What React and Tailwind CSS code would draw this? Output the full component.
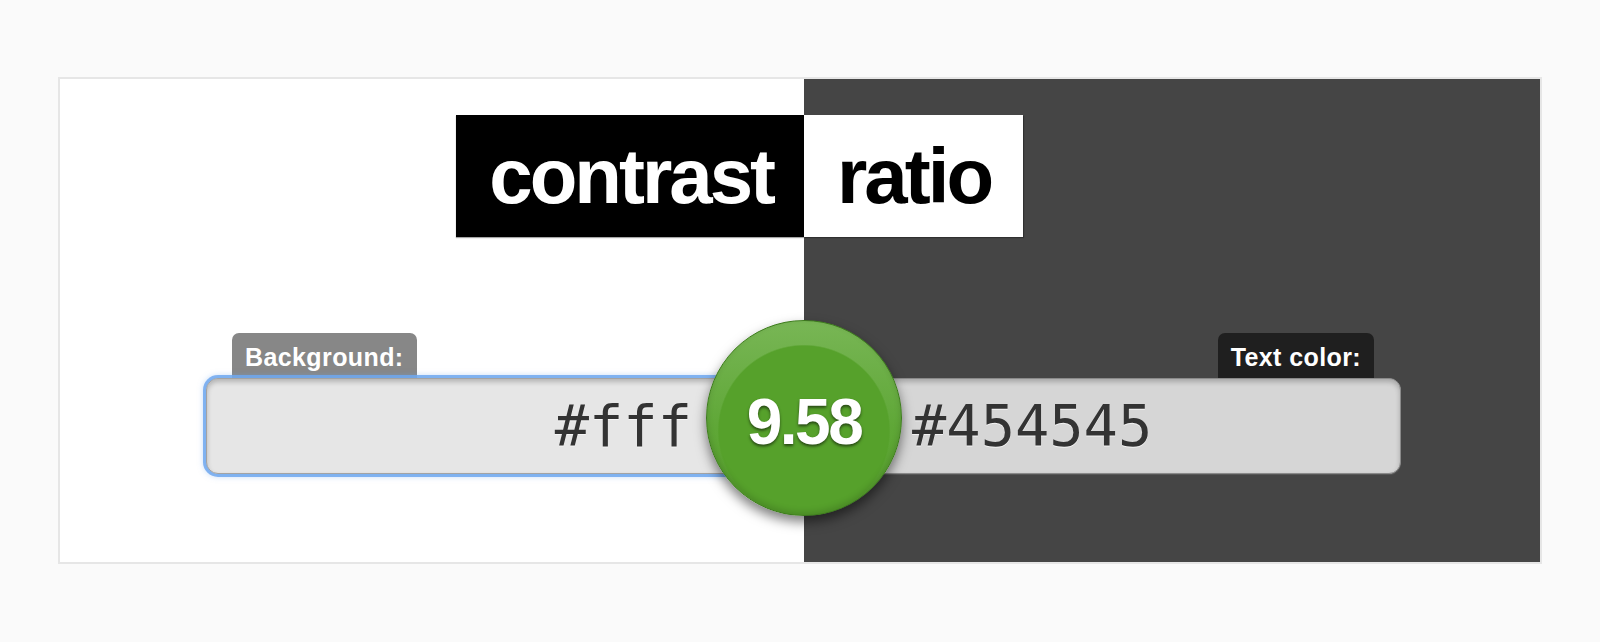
import React from "react";

export default function App() {
  return (
    <div className="min-h-screen bg-[#fafafa] pl-[58px] pr-[58px] pt-[77px] pb-[70px]">
      <div className="border-2 border-[#e6e6e6] bg-[linear-gradient(to_right,#ffffff_744px,#454545_744px)] pt-[36px] pb-[88px]">
        {/* Title */}
        <h1 className="grid grid-cols-[744px_1fr] font-['Liberation_Sans',Arial,sans-serif] font-bold text-[78px] leading-[122px] tracking-[-3px]">
          <div className="flex justify-end">
            <span className="bg-black text-white pl-[33px] pr-[31px] h-[122px] shadow-[0_1px_1px_rgba(0,0,0,0.35)]">contrast</span>
          </div>
          <div className="flex justify-start">
            <span className="bg-white text-black pl-[33px] pr-[32px] h-[122px] shadow-[1px_1px_1px_rgba(0,0,0,0.3)]">ratio</span>
          </div>
        </h1>

        {/* Inputs row */}
        <div className="relative grid grid-cols-[744px_1fr] mt-[96px]">
          <div className="flex justify-end">
            <label className="flex flex-col w-[598px]">
              <span className="self-start ml-[26px] h-[52px] px-[13px] pt-[8px] rounded-t-[7px] bg-[#878787] text-white font-bold text-[25px] leading-[32px] tracking-[0.4px] font-['Liberation_Sans',Arial,sans-serif]">
                Background:
              </span>
              <div className="relative z-10 -mt-[7px] h-[96px] rounded-[12px] border border-[#a3a3a3] bg-[#e6e6e6] shadow-[0_0_0_3px_rgba(112,168,238,0.85),0_0_6px_2px_rgba(112,168,238,0.5),inset_0_3px_5px_rgba(0,0,0,0.22)] flex items-center justify-end pr-[111px]">
                <span className="font-['DejaVu_Sans_Mono',Menlo,monospace] text-[57px] leading-none text-[#333] [text-shadow:0_1px_0_rgba(255,255,255,0.6)]">
                  #fff
                </span>
              </div>
            </label>
          </div>
          <div className="flex justify-start">
            <label className="flex flex-col w-[597px]">
              <span className="self-end mr-[27px] h-[52px] px-[13px] pt-[8px] rounded-t-[7px] bg-[#1f1f1f] text-white font-bold text-[25px] leading-[32px] tracking-[0.4px] font-['Liberation_Sans',Arial,sans-serif]">
                Text color:
              </span>
              <div className="relative z-10 -mt-[7px] h-[96px] rounded-[12px] border border-[#8a8a8a] bg-[#d6d6d6] shadow-[inset_0_3px_5px_rgba(0,0,0,0.22),0_1px_0_rgba(255,255,255,0.1)] flex items-center justify-start pl-[107px]">
                <span className="font-['DejaVu_Sans_Mono',Menlo,monospace] text-[57px] leading-none text-[#333] [text-shadow:0_1px_0_rgba(255,255,255,0.7)]">
                  #454545
                </span>
              </div>
            </label>
          </div>

          {/* Ratio circle */}
          <output className="absolute z-20 left-[646px] top-[-13px] w-[196px] h-[196px] rounded-full border border-[#3d7b1d] bg-[radial-gradient(circle_86px_at_50%_110px,#56a12b_85px,transparent_86.5px),linear-gradient(to_bottom,#78b655,#5fa737_55%,#56a12b)] shadow-[0_6px_12px_rgba(0,0,0,0.5),inset_0_-3px_6px_rgba(0,0,0,0.15)] flex items-center justify-center pt-[7px]">
            <span className="font-['Liberation_Sans',Arial,sans-serif] font-bold text-[64px] leading-none tracking-[-2.5px] text-white [text-shadow:0_2px_3px_rgba(0,0,0,0.55)]">
              9.58
            </span>
          </output>
        </div>
      </div>
    </div>
  );
}
